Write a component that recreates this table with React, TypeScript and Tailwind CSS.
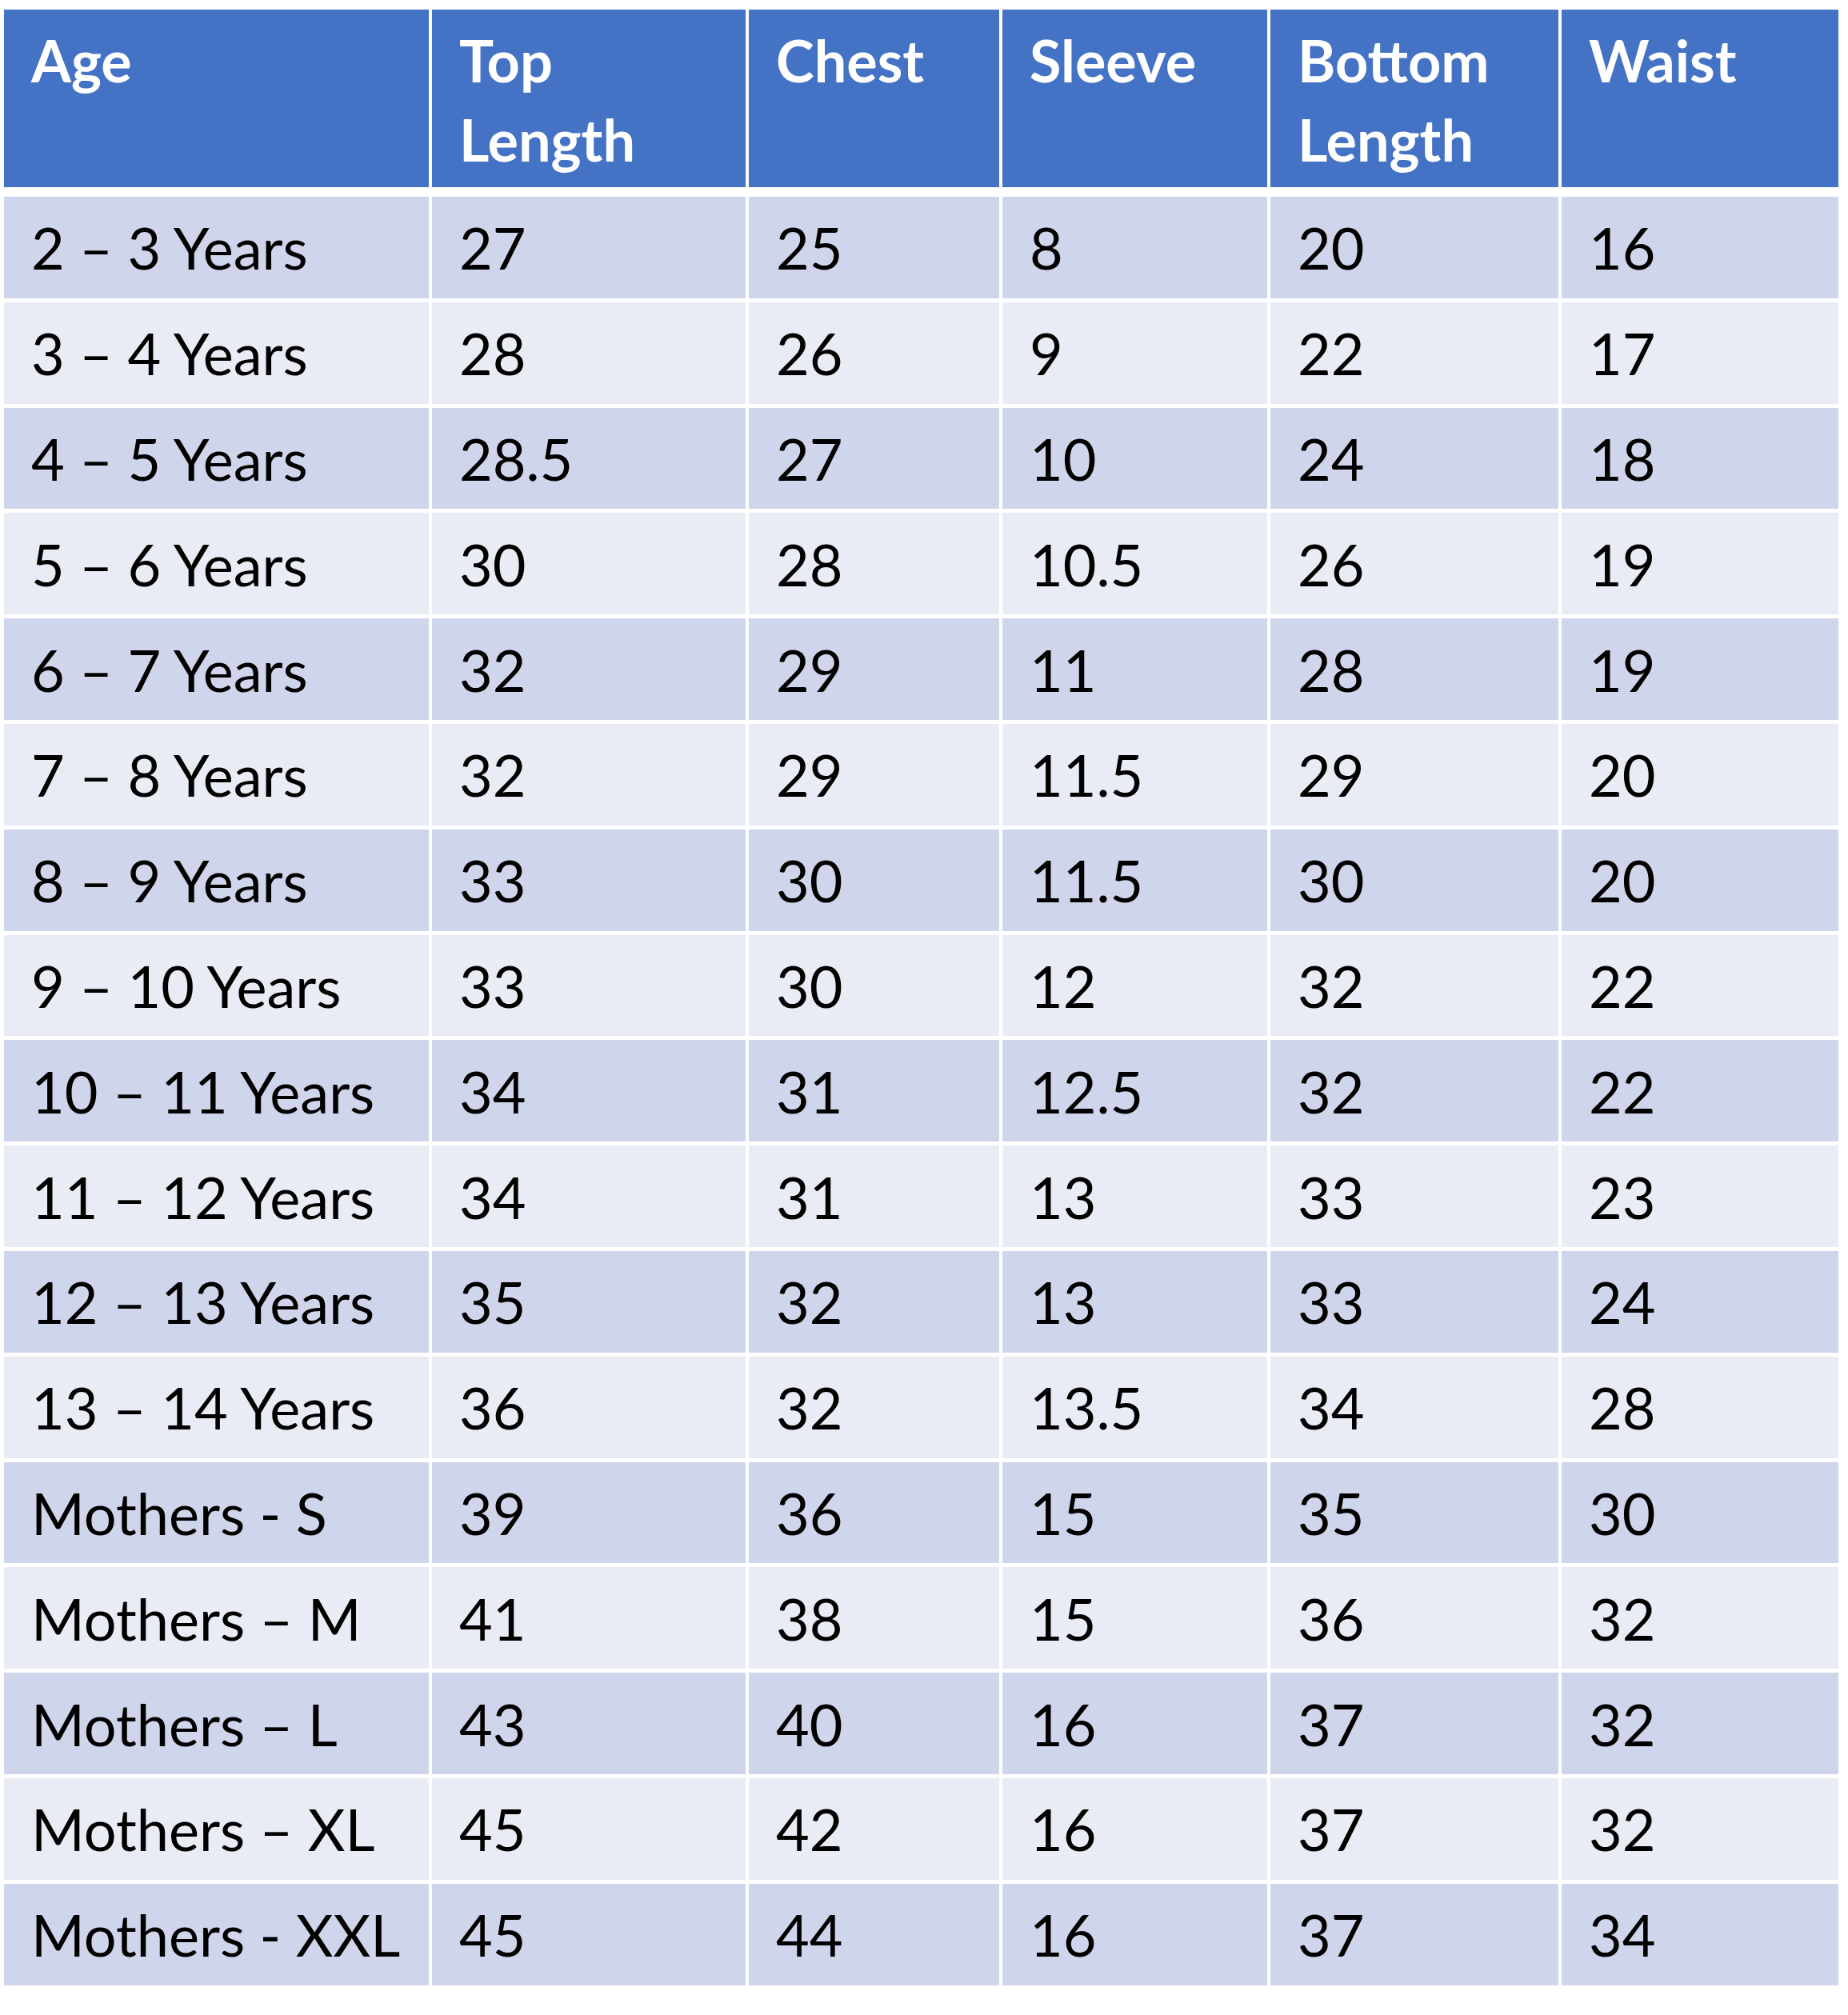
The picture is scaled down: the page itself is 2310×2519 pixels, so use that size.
import React from 'react'

const headers = [['Age'], ['Top', 'Length'], ['Chest'], ['Sleeve'], ['Bottom', 'Length'], ['Waist']]

const rows: string[][] = [
  ['2 – 3 Years', '27', '25', '8', '20', '16'],
  ['3 – 4 Years', '28', '26', '9', '22', '17'],
  ['4 – 5 Years', '28.5', '27', '10', '24', '18'],
  ['5 – 6 Years', '30', '28', '10.5', '26', '19'],
  ['6 – 7 Years', '32', '29', '11', '28', '19'],
  ['7 – 8 Years', '32', '29', '11.5', '29', '20'],
  ['8 – 9 Years', '33', '30', '11.5', '30', '20'],
  ['9 – 10 Years', '33', '30', '12', '32', '22'],
  ['10 – 11 Years', '34', '31', '12.5', '32', '22'],
  ['11 – 12 Years', '34', '31', '13', '33', '23'],
  ['12 – 13 Years', '35', '32', '13', '33', '24'],
  ['13 – 14 Years', '36', '32', '13.5', '34', '28'],
  ['Mothers - S', '39', '36', '15', '35', '30'],
  ['Mothers – M', '41', '38', '15', '36', '32'],
  ['Mothers – L', '43', '40', '16', '37', '32'],
  ['Mothers – XL', '45', '42', '16', '37', '32'],
  ['Mothers - XXL', '45', '44', '16', '37', '34'],
]

export default function App() {
  return (
    <div className="min-h-screen w-[2310px] bg-white pl-[5px] pt-[12px] font-['Lato','Liberation_Sans',sans-serif] text-black">
      <div className="grid w-[2293px] grid-cols-[531px_392px_313px_331px_360px_346px] gap-x-[4px]">
        {/* Header */}
        {headers.map((h, i) => (
          <div key={i} className="h-[222px] bg-[#4472c4] pl-[34px] pt-[14px] text-[72px] font-bold leading-[99px] text-white">
            {h.map((line) => (
              <div key={line}>{line}</div>
            ))}
          </div>
        ))}
      </div>

      {/* Body rows */}
      <div className="mt-[12px] flex w-[2293px] flex-col gap-y-[5px]">
        {rows.map((r, ri) => (
          <div key={ri} className="grid grid-cols-[531px_392px_313px_331px_360px_346px] gap-x-[4px]">
            {r.map((c, ci) => (
              <div
                key={ci}
                className={`flex h-[126.8px] items-center whitespace-nowrap pl-[34px] text-[72px] leading-none ${ri % 2 === 0 ? 'bg-[#cfd5ea]' : 'bg-[#e9ebf5]'}`}
              >
                {c}
              </div>
            ))}
          </div>
        ))}
      </div>
    </div>
  )
}
